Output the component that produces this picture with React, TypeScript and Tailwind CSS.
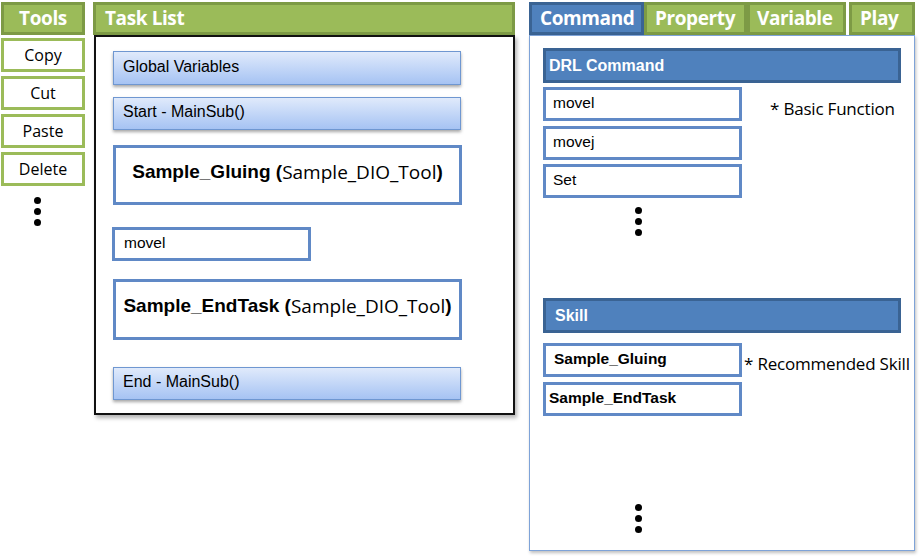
import React from "react";

const arial = { fontFamily: '"Liberation Sans", Arial, sans-serif' };
const open = { fontFamily: '"Open Sans", "Noto Sans", sans-serif' };

function Dots({ className = "" }: { className?: string }) {
  return (
    <div className={"flex flex-col gap-[4px] " + className}>
      <div className="w-[7px] h-[7px] rounded-full bg-black" />
      <div className="w-[7px] h-[7px] rounded-full bg-black" />
      <div className="w-[7px] h-[7px] rounded-full bg-black" />
    </div>
  );
}

function ToolBtn({ label }: { label: string }) {
  return (
    <div
      className="h-[34px] bg-white border-[3px] border-[#9bbb59] flex items-center justify-center text-[16px] text-black"
      style={open}
    >
      {label}
    </div>
  );
}

function GradBox({ label, className = "" }: { label: string; className?: string }) {
  return (
    <div
      className={
        "w-[348px] border border-[#6f97d1] bg-gradient-to-b from-[#e0eafb] to-[#a6c3f3] shadow-[0_2px_3px_rgba(0,0,0,0.35)] flex items-center pl-[9px] pb-[3px] text-[16px] text-black " +
        className
      }
      style={arial}
    >
      {label}
    </div>
  );
}

function TaskBox({ bold, className = "" }: { bold: string; className?: string }) {
  return (
    <div
      className={
        "w-[349px] border-[3px] border-[#6089c6] bg-white flex items-center justify-center pb-[6px] text-[19px] text-black " +
        className
      }
    >
      <span className="font-bold" style={arial}>
        {bold} (
      </span>
      <span style={open}>Sample_DIO_Tool</span>
      <span className="font-bold" style={arial}>
        )
      </span>
    </div>
  );
}

function CmdBox({
  label,
  bold = false,
  pl = "pl-[7px]",
  className = "",
}: {
  label: string;
  bold?: boolean;
  pl?: string;
  className?: string;
}) {
  return (
    <div
      className={
        "w-[199px] h-[34px] border-[3px] border-[#6089c6] bg-white flex items-center pb-[3px] text-[15.5px] text-black " +
        pl +
        " " +
        (bold ? "font-bold " : "") +
        className
      }
      style={arial}
    >
      {label}
    </div>
  );
}

function GreenHead({ label, className = "" }: { label: string; className?: string }) {
  return (
    <div
      className={
        "h-[33px] bg-[#9bbb59] border-[3px] border-[#7d9a45] text-white font-bold text-[19px] tracking-[-0.4px] flex items-center " +
        className
      }
      style={open}
    >
      {label}
    </div>
  );
}

function BlueHead({ label, className = "" }: { label: string; className?: string }) {
  return (
    <div
      className={
        "w-[358px] h-[35px] bg-[#4f81bd] border-[3px] border-[#3a6393] text-white font-bold text-[16px] flex items-center " +
        className
      }
      style={arial}
    >
      {label}
    </div>
  );
}

export default function App() {
  return (
    <div className="w-[919px] h-[558px] bg-white flex items-start pl-[1px] pt-[2px] overflow-hidden">
      {/* Tools */}
      <div className="w-[84px] flex flex-col">
        <GreenHead label="Tools" className="justify-center" />
        <div className="mt-[3px] flex flex-col gap-[4px]">
          <ToolBtn label="Copy" />
          <ToolBtn label="Cut" />
          <ToolBtn label="Paste" />
          <ToolBtn label="Delete" />
        </div>
        <Dots className="mt-[11px] ml-[33px]" />
      </div>

      {/* Task List */}
      <div className="ml-[8px] w-[422px] flex flex-col">
        <GreenHead label="Task List" className="pl-[9px]" />
        <div className="ml-[1px] w-[421px] h-[380px] border-2 border-[#111] bg-white shadow-[2px_3px_4px_rgba(0,0,0,0.3)] flex flex-col pl-[17px] pt-[14px]">
          <GradBox label="Global Variables" className="h-[34px]" />
          <GradBox label="Start - MainSub()" className="h-[33px] mt-[12px]" />
          <TaskBox bold="Sample_Gluing" className="h-[60px] mt-[15px]" />
          <CmdBox label="movel" className="mt-[22px] ml-[-1px] !pl-[9px]" />
          <TaskBox bold="Sample_EndTask" className="h-[61px] mt-[18px]" />
          <GradBox label="End - MainSub()" className="h-[33px] mt-[27px]" />
        </div>
      </div>

      {/* Right */}
      <div className="ml-[14px] w-[386px] flex flex-col">
        <div className="flex h-[33px]">
          <div
            className="w-[115px] bg-[#4f81bd] border-[3px] border-[#3a6393] text-white font-bold text-[19px] tracking-[-0.4px] flex items-center pl-[8px]"
            style={open}
          >
            Command
          </div>
          <GreenHead label="Property" className="w-[103px] pl-[8px]" />
          <GreenHead label="Variable" className="w-[99px] pl-[7px]" />
          <GreenHead label="Play" className="w-[66px] ml-[3px] pl-[8px]" />
        </div>
        <div className="h-[516px] border border-[#7ea3d8] bg-white shadow-[1px_2px_3px_rgba(0,0,0,0.25)] flex flex-col pl-[13px] pt-[12px]">
          <BlueHead label="DRL Command" className="pl-[3px]" />
          <div className="flex">
            <div className="flex flex-col">
              <CmdBox label="movel" className="mt-[4px]" />
              <CmdBox label="movej" className="mt-[5px]" />
              <CmdBox label="Set" className="mt-[4px]" />
              <Dots className="mt-[9px] ml-[92px]" />
            </div>
            <div className="ml-[28px] mt-[13px] text-[17px] text-black tracking-[-0.2px] whitespace-nowrap" style={open}>
              * Basic Function
            </div>
          </div>
          <BlueHead label="Skill" className="mt-[62px] pl-[9px]" />
          <div className="flex">
            <div className="flex flex-col">
              <CmdBox label="Sample_Gluing" bold pl="pl-[8px]" className="mt-[10px]" />
              <CmdBox label="Sample_EndTask" bold pl="pl-[3px]" className="mt-[5px]" />
              <Dots className="mt-[88px] ml-[92px]" />
            </div>
            <div className="ml-[2px] mt-[18px] text-[17px] text-black whitespace-nowrap tracking-[-0.2px]" style={open}>
              * Recommended Skill
            </div>
          </div>
        </div>
      </div>
    </div>
  );
}
